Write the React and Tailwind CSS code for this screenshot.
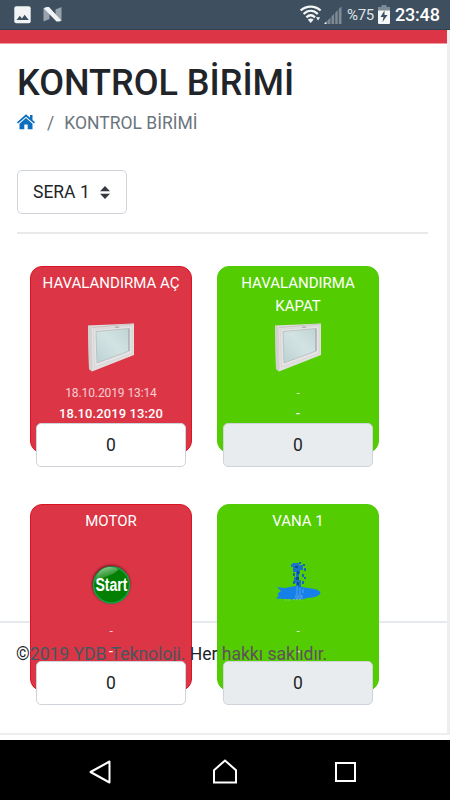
import React, { useState } from 'react';

const units = [
  { id: 1, title: 'HAVALANDIRMA AÇ', icon: 'window', on: '18.10.2019 13:14', off: '18.10.2019 13:20', active: true },
  { id: 2, title: 'HAVALANDIRMA KAPAT', icon: 'window', on: '-', off: '-', active: false },
  { id: 3, title: 'MOTOR', icon: 'start', on: '-', off: '-', active: true },
  { id: 4, title: 'VANA 1', icon: 'water', on: '-', off: '-', active: false },
];

function StatusBar() {
  return (
    <div className="flex h-[30px] shrink-0 items-center justify-between border-b border-[#2f4050] bg-[#3e505f] pl-[14px] pr-[10px] text-white">
      <div className="flex items-center gap-[12px]">
        <svg className="h-[18px] w-[17px]" viewBox="0 0 17 18">
          <rect x="0.3" y="0.3" width="16.4" height="17" rx="2" fill="#f1f3f5" />
          <path d="M2.5 14l3.3-4.2 2.2 2.6 2.6-3.6 4.2 5.2z" fill="#3e505f" />
        </svg>
        <svg className="h-[15px] w-[19px]" viewBox="0 0 19 15">
          <path d="M0.5 1L6.5 5.5V12L0.5 14.5z" fill="#98a3ac" />
          <path d="M12.5 2.5L18.5 0V14L12.5 9z" fill="#98a3ac" />
          <path d="M0.8 1.5Q1.5 0 4 0H6L18.3 13.5Q17 14.7 15.5 14.5H13.5z" fill="#f1f3f5" />
        </svg>
      </div>
      <div className="flex items-center">
        <svg className="h-[19px] w-[22px]" viewBox="0 0 22 19" fill="none" stroke="#f4f6f7" strokeWidth="2.3">
          <path d="M0.7 5.5C6.5 0.3 14.8 0.3 20.6 5.5" />
          <path d="M3.6 9C8 4.8 13.4 4.8 17.8 9" />
          <path d="M6.4 12.3C9.2 9.7 12.2 9.7 15 12.3" />
          <path d="M7.8 14.5Q10.7 12.3 13.6 14.5L10.7 18z" fill="#f4f6f7" stroke="none" />
          <path d="M16 12.3h4.2L18.1 15.5z" fill="#f4f6f7" stroke="none" />
        </svg>
        <svg className="ml-[2px] h-[18px] w-[18px]" viewBox="0 0 18 18" fill="#7e8a95">
          <path d="M0 18L2.5 15.3V18z" fill="#f4f6f7" />
          <path d="M3.5 14.5l3-3V18h-3zM7.5 10.5l2.6-2.7V18H7.5zM11.2 6.8l2.5-2.6V18h-2.5zM14.8 3L17.5 0.5V18h-2.7z" />
        </svg>
        <span className="ml-[5px] w-[31px] whitespace-nowrap pt-[2px] text-[15px] leading-none tracking-[-0.3px] text-[#dfe3e6]">%75</span>
        <svg className="h-[19px] w-[12px]" viewBox="0 0 12 19">
          <path d="M3.5 0h5v2H12v4H0V2h3.5z" fill="#7e8a95" />
          <path d="M0 5.5h12V18q0 1-1 1H1q-1 0-1-1z" fill="#f4f6f7" />
          <path d="M6.5 5.5L2.5 12h3l-1 5L9.5 10H6.5z" fill="#3e505f" />
        </svg>
        <span className="ml-[5px] w-[45px] whitespace-nowrap pt-[1px] text-[18px] font-medium leading-none tracking-[-0.2px]">23:48</span>
      </div>
    </div>
  );
}

function WindowIcon() {
  return (
    <svg className="h-[50px] w-[50px] shrink-0" viewBox="0 0 50 50">
      <defs>
        <linearGradient id="glass" x1="0" y1="1" x2="1" y2="0">
          <stop offset="0" stopColor="#bdd2d3" />
          <stop offset="0.55" stopColor="#d3e3e3" />
          <stop offset="1" stopColor="#c0d3d3" />
        </linearGradient>
      </defs>
      <path d="M2 3.5L48 1.5V33L6 49.5L3 47z" fill="#e2dfdf" />
      <path d="M2 3.5L5.5 5L6.5 49.3L3 47z" fill="#d2d0d0" />
      <path d="M6 5.5L48 2" stroke="#c6c4c4" fill="none" />
      <path d="M7.5 7.5L46 4V31.500L8.500 45z" fill="#e6e4e4" stroke="#d0cece" strokeWidth="0.6" />
      <path d="M10 9.5L43 6.5V29L11 41z" fill="url(#glass)" stroke="#b3bcbc" strokeWidth="0.8" />
      <path d="M43 6.5V29" stroke="#9aa3a3" strokeWidth="0.9" />
      <path d="M29 5.2h4" stroke="#9da1a1" strokeWidth="1" />
    </svg>
  );
}

function StartIcon() {
  return (
    <svg className="h-[50px] w-[50px] shrink-0" viewBox="0 0 50 50">
      <defs>
        <radialGradient id="shade">
          <stop offset="0.8" stopColor="#5b1020" stopOpacity="0.8" />
          <stop offset="1" stopColor="#dc3545" stopOpacity="0" />
        </radialGradient>
        <linearGradient id="shine" x1="0" y1="0" x2="0.5" y2="1">
          <stop offset="0" stopColor="#b5dfb5" />
          <stop offset="1" stopColor="#178a17" stopOpacity="0.5" />
        </linearGradient>
      </defs>
      <circle cx="25" cy="24" r="22" fill="url(#shade)" />
      <circle cx="25.5" cy="25" r="18" fill="#038003" stroke="#12a34a" strokeWidth="1.5" />
      <path d="M9 21C11.5 8 23.5 4 32.5 9.5C27.5 16 19.5 15 9.5 22z" fill="url(#shine)" />
      <text x="25.5" y="30.5" textAnchor="middle" textLength="32" lengthAdjust="spacingAndGlyphs" fill="#fff" className="font-['Liberation_Sans'] text-[17.5px] font-bold">Start</text>
    </svg>
  );
}

function WaterIcon() {
  return (
    <svg className="h-[50px] w-[50px] shrink-0" viewBox="0 0 50 50">
      <path d="M4 27L12 28L22 26L35 28Q47 29 47.5 33Q46 37.5 34 38L29 39.5H22L3 38.5L6 35L4 34L8 31z" fill="#1780e8" />
      <path d="M20 3h6v2h4v5h-3v4h-1v6h2v7h-5v-4h-2v-6h2v-5h-3V7h-2V5z" fill="#1a72cb" />
      <path d="M22 6h3v2h-3zM24 11h2v3h-2zM23 17h3v3h-3zM24 22h2v3h-2z" fill="#0c4b8c" />
      <path d="M30 4h2v2h-2zM31 8h2v3h-2zM29 14h2v3h-2zM31 17h2v2h-2zM20 13h2v3h-2zM20 21h2v3h-2zM29 21h2v3h-2zM26 2h2v2h-2z" fill="#1767b5" />
      <path d="M24 26v9M27 28v7M30 29v4" stroke="#58a2e7" strokeWidth="1" />
      <path d="M22 35h8v4h-8z" fill="#4f9bea" opacity="0.7" />
      <path d="M12 40h6M20 39.7h9" stroke="#9cc98e" strokeWidth="0.8" strokeDasharray="2 1" />
    </svg>
  );
}

const icons = { window: WindowIcon, start: StartIcon, water: WaterIcon };

function UnitCard({ unit }) {
  const Icon = icons[unit.icon];
  return (
    <div className={`relative flex h-[187px] flex-col items-center rounded-[12px] border text-white ${unit.active ? 'border-[#d91522] bg-[#dc3545]' : 'border-[#50cc08] bg-[#53cd01]'}`}>
      <h2 className="mt-[5px] h-[50px] w-[150px] shrink-0 text-center text-[15px] leading-[22.5px]">{unit.title}</h2>
      <Icon />
      <p className="mt-[12px] shrink-0 text-[12px] leading-[18px] tracking-[-0.1px] opacity-75">{unit.on}</p>
      <p className="mt-[2px] h-[19px] shrink-0 text-[13px] font-medium leading-[19px] tracking-[0.1px]">{unit.off}</p>
      <input
        type="text"
        defaultValue="0"
        readOnly={!unit.active}
        className={`relative z-30 h-[44px] w-[150px] shrink-0 rounded-[5px] border border-[#ced4da] text-center text-[17.5px] text-[#212529] outline-none ${unit.active ? 'bg-white' : 'bg-[#e9ecef]'}`}
      />
    </div>
  );
}

function NavigationBar() {
  return (
    <div className="flex h-[60px] shrink-0 items-center justify-between bg-black pl-[88px] pr-[94px] pt-[4px]">
      <svg className="h-[26px] w-[24px]" viewBox="0 0 24 26" fill="none" stroke="#fff" strokeWidth="2">
        <path d="M2.5 13L21.5 2.5V23.5z" strokeLinejoin="round" />
      </svg>
      <svg className="ml-[4px] h-[26px] w-[26px]" viewBox="0 0 26 26" fill="none" stroke="#fff" strokeWidth="2">
        <path d="M2 11.2L13 1.5L24 11.2V23.5H2z" />
      </svg>
      <svg className="h-[26px] w-[22px]" viewBox="0 0 22 26" fill="none" stroke="#fff" strokeWidth="2">
        <rect x="2" y="4" width="19" height="18" />
      </svg>
    </div>
  );
}

export default function App() {
  const [area] = useState('SERA 1');

  return (
    <div className="flex h-[800px] w-[450px] flex-col overflow-hidden bg-white font-['Roboto',sans-serif] text-[#212529]">
      <StatusBar />
      <main className="h-[705px] shrink-0 border-b-[2px] border-r-[3px] border-[#eeeeee] bg-white">
        <div className="h-[14px] border-b border-[#ee99a1] bg-[#dc3545]" />
        <div className="h-[577px] pl-[17px] pr-[19px] pt-[17px]">
          <h1 className="whitespace-nowrap text-[36px] font-medium leading-[44px]">KONTROL BİRİMİ</h1>
          {/* breadcrumb */}
          <nav className="mt-[5px] flex h-[27px] items-center text-[17.5px] text-[#6c757d]">
            <svg className="mb-[3px] h-[18px] w-[18px]" viewBox="0 0 18 18" fill="#0d6ebd">
              <path d="M9 1.3L0 9.3L1.1 10.6L9 3.7L16.9 10.6L18 9.3L15.5 7V2H13v2.8z" />
              <path d="M9 5L2.5 10.7V16.3H7.3V11.5H10.7V16.3H15.5V10.7z" />
            </svg>
            <span className="ml-[12px]">/</span>
            <span className="ml-[10px] whitespace-nowrap">KONTROL BİRİMİ</span>
          </nav>
          <button className="mt-[33px] flex h-[44px] w-[110px] items-center rounded-[5px] border border-[#ced4da] pl-[15px] text-[17.5px]">
            <span className="w-[67px] whitespace-nowrap text-left">{area}</span>
            <svg className="h-[13px] w-[10px]" viewBox="0 0 10 13" fill="#343a40">
              <path d="M5 0L10 5.3H0zM5 13L0 7.7H10z" />
            </svg>
          </button>
          <hr className="mt-[18px] border-t-2 border-[#e9e9e9]" />
          <div className="ml-[13px] mt-[32px] grid w-[349px] grid-cols-2 gap-x-[25px] gap-y-[51px]">
            {units.map((unit) => (
              <UnitCard key={unit.id} unit={unit} />
            ))}
          </div>
        </div>
        {/* footer runs across the last row of cards */}
        <footer className="border-t-2 border-[#e6eaee] pl-[16px] pt-[18px]">
          <p className="relative z-20 whitespace-nowrap text-[17.55px] leading-[27px]">
            <span>©</span>
            <span className="text-[#46585f]">2019 YDB Teknoloji.</span>
            <span> Her </span>
            <span className="text-[#60505d]">hakkı saklıdır.</span>
          </p>
        </footer>
      </main>
      <div className="h-[5px] shrink-0 bg-white" />
      <NavigationBar />
    </div>
  );
}
